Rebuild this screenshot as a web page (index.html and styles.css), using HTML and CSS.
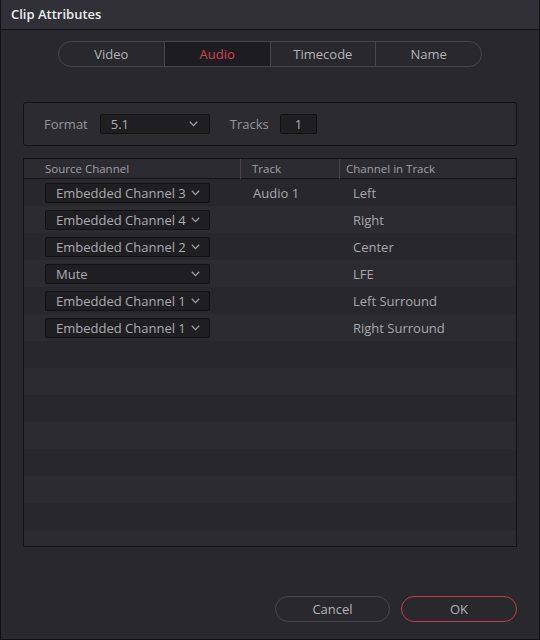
FILE: index.html
```html
<!DOCTYPE html>
<html>
<head>
<meta charset="utf-8">
<link rel="stylesheet" href="styles.css">
</head>
<body>
<div class="window">
  <div class="titlebar">Clip Attributes</div>
  <div class="content">
    <div class="tabs">
      <div class="tab">Video</div>
      <div class="tab active">Audio</div>
      <div class="tab">Timecode</div>
      <div class="tab">Name</div>
    </div>

    <div class="format-panel">
      <span class="label">Format</span>
      <div class="select format-select"><span>5.1</span><svg class="chev" width="9" height="6" viewBox="0 0 9 6"><path d="M0.8 0.8 L4.5 4.6 L8.2 0.8" fill="none" stroke="#a0a0a4" stroke-width="1.3"/></svg></div>
      <span class="label tracks-label">Tracks</span>
      <div class="num-input">1</div>
    </div>

    <div class="table">
      <div class="thead">
        <div class="th c1">Source Channel</div>
        <div class="th c2">Track</div>
        <div class="th c3">Channel in Track</div>
      </div>
      <div class="tbody">
        <div class="row">
          <div class="cell c1"><div class="select row-select"><span>Embedded Channel 3</span><svg class="chev" width="9" height="6" viewBox="0 0 9 6"><path d="M0.8 0.8 L4.5 4.6 L8.2 0.8" fill="none" stroke="#a0a0a4" stroke-width="1.3"/></svg></div></div>
          <div class="cell c2">Audio 1</div>
          <div class="cell c3">Left</div>
        </div>
        <div class="row">
          <div class="cell c1"><div class="select row-select"><span>Embedded Channel 4</span><svg class="chev" width="9" height="6" viewBox="0 0 9 6"><path d="M0.8 0.8 L4.5 4.6 L8.2 0.8" fill="none" stroke="#a0a0a4" stroke-width="1.3"/></svg></div></div>
          <div class="cell c2"></div>
          <div class="cell c3">Right</div>
        </div>
        <div class="row">
          <div class="cell c1"><div class="select row-select"><span>Embedded Channel 2</span><svg class="chev" width="9" height="6" viewBox="0 0 9 6"><path d="M0.8 0.8 L4.5 4.6 L8.2 0.8" fill="none" stroke="#a0a0a4" stroke-width="1.3"/></svg></div></div>
          <div class="cell c2"></div>
          <div class="cell c3">Center</div>
        </div>
        <div class="row">
          <div class="cell c1"><div class="select row-select"><span>Mute</span><svg class="chev" width="9" height="6" viewBox="0 0 9 6"><path d="M0.8 0.8 L4.5 4.6 L8.2 0.8" fill="none" stroke="#a0a0a4" stroke-width="1.3"/></svg></div></div>
          <div class="cell c2"></div>
          <div class="cell c3">LFE</div>
        </div>
        <div class="row">
          <div class="cell c1"><div class="select row-select"><span>Embedded Channel 1</span><svg class="chev" width="9" height="6" viewBox="0 0 9 6"><path d="M0.8 0.8 L4.5 4.6 L8.2 0.8" fill="none" stroke="#a0a0a4" stroke-width="1.3"/></svg></div></div>
          <div class="cell c2"></div>
          <div class="cell c3">Left Surround</div>
        </div>
        <div class="row">
          <div class="cell c1"><div class="select row-select"><span>Embedded Channel 1</span><svg class="chev" width="9" height="6" viewBox="0 0 9 6"><path d="M0.8 0.8 L4.5 4.6 L8.2 0.8" fill="none" stroke="#a0a0a4" stroke-width="1.3"/></svg></div></div>
          <div class="cell c2"></div>
          <div class="cell c3">Right Surround</div>
        </div>
        <div class="row"></div>
        <div class="row"></div>
        <div class="row"></div>
        <div class="row"></div>
        <div class="row"></div>
        <div class="row"></div>
        <div class="row"></div>
        <div class="row"></div>
      </div>
    </div>

    <div class="buttons">
      <div class="btn">Cancel</div>
      <div class="btn ok">OK</div>
    </div>
  </div>
</div>
</body>
</html>
```

FILE: styles.css
```css
html, body {
  margin: 0;
  padding: 0;
  background: #28282d;
}
body {
  font-family: "Open Sans", "Noto Sans", sans-serif;
  font-size: 13px;
  color: #a9a9ad;
}
.window {
  box-sizing: border-box;
  width: 540px;
  height: 640px;
  border: 1px solid #121214;
  border-top: none;
  background: #28282d;
  display: flex;
  flex-direction: column;
}
.titlebar {
  height: 30px;
  box-sizing: border-box;
  background: #303036;
  border-bottom: 1px solid #141417;
  color: #ececee;
  font-weight: 600;
  font-size: 13px;
  line-height: 29px;
  padding-left: 10px;
}
.content {
  flex: 1;
  display: flex;
  flex-direction: column;
  padding: 11px 22px 0 22px;
}
.tabs {
  align-self: center;
  display: flex;
  width: 424px;
  height: 26px;
  box-sizing: border-box;
  border: 1px solid #46464c;
  border-radius: 13px;
  overflow: hidden;
}
.tab {
  flex: 1;
  text-align: center;
  line-height: 24px;
  color: #b4b4b8;
  border-left: 1px solid #46464c;
}
.tab:first-child {
  border-left: none;
}
.tab.active {
  background: #1d1d21;
  color: #d9404c;
}
.format-panel {
  margin-top: 35px;
  height: 44px;
  box-sizing: border-box;
  border: 1px solid #141417;
  border-radius: 3px;
  background: #2b2b30;
  display: flex;
  align-items: center;
  padding-left: 20px;
}
.label {
  color: #96969b;
}
.select {
  box-sizing: border-box;
  height: 20px;
  background: #1f1f22;
  border: 1px solid #121214;
  border-radius: 2px;
  display: flex;
  align-items: center;
  justify-content: space-between;
  padding: 0 11px 0 10px;
  color: #acacb0;
}
.format-select {
  width: 110px;
  margin-left: 12px;
}
.tracks-label {
  margin-left: 20px;
}
.num-input {
  box-sizing: border-box;
  width: 37px;
  height: 20px;
  margin-left: 11px;
  background: #1f1f22;
  border: 1px solid #121214;
  border-radius: 2px;
  line-height: 18px;
  padding-left: 14px;
  color: #acacb0;
}
.chev {
  display: block;
}
.table {
  margin-top: 12px;
  height: 389px;
  box-sizing: border-box;
  border: 1px solid #141417;
  background: #27272c;
  overflow: hidden;
}
.thead {
  display: grid;
  grid-template-columns: 216px 99px 1fr;
  height: 20px;
  box-sizing: border-box;
  border-bottom: 1px solid #141417;
  background: #2b2b30;
  font-size: 11.5px;
  color: #a0a0a5;
}
.th {
  line-height: 20px;
}
.th.c1 { padding-left: 21px; }
.th.c2 { padding-left: 11px; border-left: 1px solid #45454b; }
.th.c3 { padding-left: 6px; border-left: 1px solid #45454b; }
.row {
  display: grid;
  grid-template-columns: 216px 99px 1fr;
  height: 27px;
  align-items: center;
  background: #27272c;
}
.row:nth-child(even) {
  background: #2b2b30;
}
.cell.c1 { padding-left: 21px; }
.cell.c2 { padding-left: 13px; color: #a9a9ad; }
.cell.c3 { padding-left: 14px; color: #a9a9ad; }
.row-select {
  width: 165px;
  padding-right: 9px;
}
.buttons {
  display: flex;
  justify-content: flex-end;
  gap: 11px;
  margin-top: 49px;
}
.btn {
  box-sizing: border-box;
  width: 115px;
  height: 26px;
  border: 1px solid #45454b;
  border-radius: 13px;
  text-align: center;
  line-height: 24px;
  color: #b4b4b8;
}
.btn.ok {
  width: 116px;
  border-color: #c03d49;
}
```
